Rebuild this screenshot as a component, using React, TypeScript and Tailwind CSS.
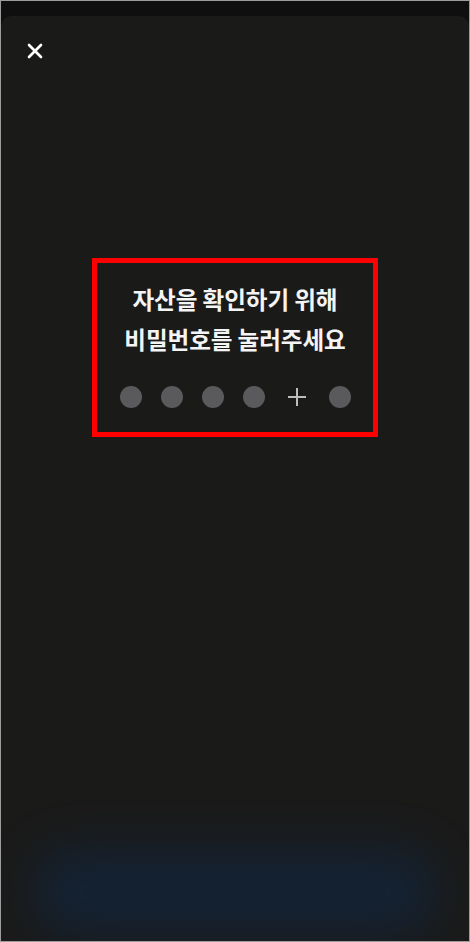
import { X } from 'lucide-react';

const pinSlots = ['dot', 'dot', 'dot', 'dot', 'plus', 'dot'] as const;

export default function App() {
  return (
    <div className="flex h-[942px] w-[470px] flex-col border border-[#9d9d9d] bg-[#0e0f0e] pt-[15px] font-['Noto_Sans_CJK_KR','Noto_Sans',sans-serif]">
      <div className="relative flex flex-1 flex-col overflow-hidden rounded-t-[10px] bg-[#1a1a19] px-[24px] pt-[25px]">
        <button type="button" aria-label="닫기" className="flex h-[19px] w-[19px] items-center justify-center text-white">
          <X className="h-[24px] w-[24px] shrink-0" strokeWidth={2.6} />
        </button>

        <div className="relative z-10 mx-auto mt-[198px] flex h-[179px] w-[286px] flex-col items-center border-[5px] border-[#ff0000] pt-[16px]">
          <p className="text-center text-[23.6px] font-semibold leading-[40px] tracking-[-0.1px] text-[#f4f4f4]">
            자산을 확인하기 위해
            <br />
            비밀번호를 눌러주세요
          </p>
          <div className="mt-[27px] flex items-center gap-[19px]">
            {pinSlots.map((slot, index) =>
              slot === 'plus' ? (
                <span key={index} className="flex h-[22px] w-[26px] items-center justify-center text-[#bdbdbd]">
                  <svg width="20" height="20" viewBox="0 0 20 20" fill="none">
                    <path d="M10 1v18M1 10h18" stroke="currentColor" strokeWidth="2" />
                  </svg>
                </span>
              ) : (
                <span key={index} className="h-[22px] w-[22px] rounded-full bg-[#5a5a5d]" />
              )
            )}
          </div>
        </div>

        <div className="pointer-events-none absolute bottom-[4px] left-[30px] right-[30px] h-[90px] rounded-full bg-[#132438] opacity-80 blur-[22px]" />
      </div>
    </div>
  );
}
